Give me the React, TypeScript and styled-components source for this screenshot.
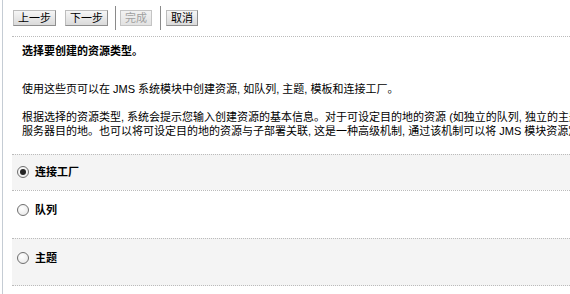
import styled, { createGlobalStyle } from "styled-components";

const GlobalStyle = createGlobalStyle`
  html, body {
    margin: 0;
    padding: 0;
    background: #fff;
    overflow: hidden;
  }
  body {
    font-family: "Liberation Sans", "Noto Sans CJK SC", sans-serif;
    font-size: 11px;
    color: #000;
  }
`;

const Page = styled.div`
  margin-left: 2px;
  border-left: 1px solid #c5ccd4;
  padding-left: 9px;
  min-height: 294px;
  width: 560px;
`;

const Toolbar = styled.div`
  display: flex;
  align-items: center;
  height: 24px;
  padding: 6px 0 6px 1px;
  border-bottom: 1px dotted #bbb;
`;

const Button = styled.button<{ $gap?: number }>`
  font-family: "Liberation Sans", "Noto Sans CJK SC", sans-serif;
  font-size: 11px;
  line-height: 14px;
  height: 16px;
  padding: 0 4px;
  margin: 0 ${(p) => p.$gap ?? 0}px 0 0;
  border: 1px solid #8f8f8f;
  border-top-color: #bdbdbd;
  border-left-color: #bdbdbd;
  background: linear-gradient(#f6f6f6, #dadada);
  color: #000;
  cursor: pointer;
  &:disabled {
    color: #a0a0a0;
    border-color: #c4c4c4;
    background: linear-gradient(#f2f2f2, #e2e2e2);
    cursor: default;
  }
`;

const Divider = styled.span<{ $left: number; $right: number }>`
  width: 1px;
  height: 24px;
  background: #8a8a8a;
  margin: 0 ${(p) => p.$right}px 0 ${(p) => p.$left}px;
`;

const Intro = styled.div`
  padding: 7px 0 16px 10px;
`;

const Heading = styled.div`
  font-weight: bold;
  line-height: 14px;
  margin-bottom: 24px;
`;

const Para = styled.p<{ $top?: number }>`
  margin: ${(p) => p.$top ?? 0}px 0 0;
  line-height: 14px;
  white-space: nowrap;
`;

const Row = styled.div<{ $shaded?: boolean; $height: number; $padTop: number; $last?: boolean }>`
  box-sizing: border-box;
  display: flex;
  align-items: flex-start;
  height: ${(p) => p.$height}px;
  padding: ${(p) => p.$padTop}px 0 0 5px;
  background: ${(p) => (p.$shaded ? "#f4f4f4" : "#fff")};
  border-top: 1px dotted #bbb;
  border-bottom: ${(p) => (p.$last ? "1px dotted #bbb" : "none")};
`;

const Radio = styled.span<{ $checked?: boolean }>`
  box-sizing: border-box;
  position: relative;
  width: 12px;
  height: 12px;
  margin-top: 1px;
  border-radius: 50%;
  border: 1px solid #6f6f6f;
  background: radial-gradient(circle at 40% 35%, #fff, #e4e4e4);
  &::after {
    content: "";
    display: ${(p) => (p.$checked ? "block" : "none")};
    position: absolute;
    left: 2px;
    top: 2px;
    width: 6px;
    height: 6px;
    border-radius: 50%;
    background: #222;
  }
`;

const Label = styled.span`
  margin-left: 6px;
  font-weight: bold;
  line-height: 14px;
`;

const types = [
  { name: "连接工厂", checked: true, shaded: true, height: 36, padTop: 10 },
  { name: "队列", checked: false, shaded: false, height: 48, padTop: 12 },
  { name: "主题", checked: false, shaded: true, height: 48, padTop: 12 },
];

export default function App() {
  return (
    <>
      <GlobalStyle />
      <Page>
        <Toolbar>
          <Button $gap={9}>上一步</Button>
          <Button>下一步</Button>
          <Divider $left={7} $right={4} />
          <Button disabled>完成</Button>
          <Divider $left={8} $right={5} />
          <Button>取消</Button>
        </Toolbar>
        <Intro>
          <Heading>选择要创建的资源类型。</Heading>
          <Para>使用这些页可以在 JMS 系统模块中创建资源, 如队列, 主题, 模板和连接工厂。</Para>
          <Para $top={14}>
            根据选择的资源类型, 系统会提示您输入创建资源的基本信息。对于可设定目的地的资源 (如独立的队列, 独立的主题), 还可以将资源定位到 JMS
            <br />
            服务器目的地。也可以将可设定目的地的资源与子部署关联, 这是一种高级机制, 通过该机制可以将 JMS 模块资源定位到一组服务器上。
          </Para>
        </Intro>
        {types.map((t, i) => (
          <Row
            key={t.name}
            $shaded={t.shaded}
            $height={t.height}
            $padTop={t.padTop}
            $last={i === types.length - 1}
          >
            <Radio $checked={t.checked} />
            <Label>{t.name}</Label>
          </Row>
        ))}
      </Page>
    </>
  );
}
